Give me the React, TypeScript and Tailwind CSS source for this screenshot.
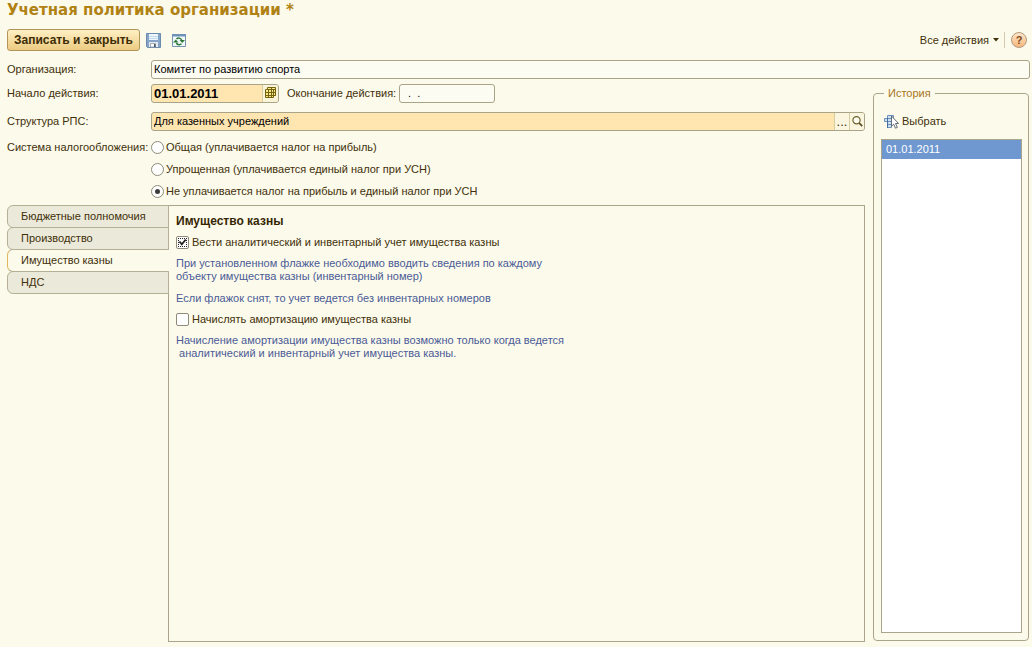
import { useState } from "react";

const taxSystems = [
  "Общая (уплачивается налог на прибыль)",
  "Упрощенная (уплачивается единый налог при УСН)",
  "Не уплачивается налог на прибыль и единый налог при УСН",
];

const tabs = ["Бюджетные полномочия", "Производство", "Имущество казны", "НДС"];

function SaveIcon() {
  return (
    <svg width="15" height="15" viewBox="0 0 15 15" aria-hidden="true">
      <path d="M.5.5h14v14h-13l-1-1z" fill="#86a5c8" stroke="#6a8aae" />
      <path d="M3 1h9v6H3z" fill="#eef6fb" />
      <path d="M3 3.500h9M3 5.500h9" stroke="#c3dbea" />
      <path d="M3 9h9v5H3z" fill="#e6eaec" />
      <path d="M4.500 10.500h5v3.500h-5z" fill="#fff" stroke="#8a99a8" strokeWidth=".8" />
      <path d="M8 11h1.500v3H8z" fill="#46586c" />
    </svg>
  );
}

function RefreshIcon() {
  return (
    <svg width="14" height="13" viewBox="0 0 14 13" aria-hidden="true">
      <path d="M.5.5h13v12H.5z" fill="#f4fafc" stroke="#7893ad" />
      <path d="M0 0h14v2.500H0z" fill="#6f92b8" />
      <path d="M4.500 5C6 3.600 8.500 3.800 9.700 5.800M9.500 9.800C8 11.200 5.500 11 4.300 9" fill="none" stroke="#2d7a38" strokeWidth="1.500" />
      <path d="M7.500 6h5.500L10.200 9zM1 8.500h5.500L3.800 5.500z" fill="#2d7a38" />
    </svg>
  );
}

function CalendarIcon() {
  return (
    <svg width="11" height="12" viewBox="0 0 11 12" aria-hidden="true">
      <path d="M2.500.500h8v8h-2v2h-8v-8h2z" fill="#f7e88a" stroke="#75620f" />
      <path d="M.500 5.500h10M.500 8.500h10M2.500 2.500h8M3.500 2.500v8M6.500 1v9.500M8.500 2v7" stroke="#75620f" fill="none" />
    </svg>
  );
}

function SearchIcon() {
  return (
    <svg width="11" height="11" viewBox="0 0 11 11" aria-hidden="true">
      <circle cx="4.500" cy="4.200" r="3.600" fill="#fdfdf0" stroke="#6f6330" strokeWidth="1.200" />
      <path d="M7 6.800l3.200 3.400" stroke="#5f5425" strokeWidth="1.800" />
    </svg>
  );
}

function SelectIcon() {
  return (
    <svg width="15" height="15" viewBox="0 0 15 15" aria-hidden="true">
      <path d="M3.500 1.500h6v3h-6zM.5 4.500h9v3h-9zM3.500 7.500h5v3h-5zM3.500 10.500h4v3h-4z" fill="#cfe0f0" stroke="#6d93bd" />
      <path d="M3.500 4v10" stroke="#44719f" />
      <path d="M7.500 2v10.200l2.200-2 1.800 4 1.800-.8-1.800-3.900h3z" fill="#fff" stroke="#555e6c" strokeWidth=".9" />
    </svg>
  );
}

function CheckBox({ id, label, initial }: { id: string; label: string; initial?: boolean }) {
  const [on, setOn] = useState(Boolean(initial));
  return (
    <div className="flex h-4 items-center gap-[3px]">
      <span className="relative flex size-[13px]">
        <input
          id={id}
          type="checkbox"
          checked={on}
          onChange={(e) => setOn(e.target.checked)}
          className="size-[13px] appearance-none rounded-[2px] border border-[#8f8b78] bg-white"
        />
        {on && (
          <svg className="pointer-events-none absolute inset-0" width="13" height="13" viewBox="0 0 13 13" aria-hidden="true">
            <path d="M2 2.500h9M2 10.500h9M2.500 2v9M10.500 2v9" stroke="#222" strokeDasharray="1 1" />
            <path d="M3.500 5.500l2.300 2.800 4-4.800" fill="none" stroke="#222" strokeWidth="1.900" />
          </svg>
        )}
      </span>
      <label htmlFor={id}>{label}</label>
    </div>
  );
}

export default function App() {
  const [tax, setTax] = useState(2);
  const [tab, setTab] = useState(2);

  return (
    <main className="flex min-h-screen flex-col bg-[#fcfaeb] pr-[2px] pb-[5px] pl-[7px] font-['Liberation_Sans',Arial,sans-serif] text-[11px] leading-[13px] text-[#41300a]">
      <h1 className="h-[29px] font-['DejaVu_Sans',Verdana,sans-serif] text-[15px] leading-5 font-bold text-[#b08214]">
        Учетная политика организации *
      </h1>

      <div className="flex h-[22px] items-center">
        <button className="h-[22px] rounded-[3px] border border-[#b3955a] bg-linear-to-b from-[#fff0c4] to-[#eccb80] px-[6px] text-[12px] font-bold text-[#3d2c05]">
          Записать и закрыть
        </button>
        <button aria-label="Записать" className="ml-[6px]"><SaveIcon /></button>
        <button aria-label="Перечитать" className="ml-[11px]"><RefreshIcon /></button>
        <button className="ml-auto flex items-center gap-1">
          Все действия
          <svg width="6" height="4" viewBox="0 0 6 4" aria-hidden="true"><path d="M0 0h6L3 3.500z" fill="#41300a" /></svg>
        </button>
        <span className="ml-[5px] h-4 w-px bg-[#cfcab0]" />
        <button
          aria-label="Справка"
          className="ml-[6px] mr-[3px] size-4 rounded-full border border-[#b39a80] bg-linear-to-b from-[#ffe6c8] to-[#f5b67c] text-[11px] leading-[14px] font-bold text-[#7c4a22]"
        >
          ?
        </button>
      </div>

      <div className="mt-[8px] flex h-5 items-center">
        <label htmlFor="org" className="w-36 shrink-0">Организация:</label>
        <input id="org" defaultValue="Комитет по развитию спорта" className="h-[19px] min-w-0 flex-1 rounded-[3px] border border-[#a9a387] bg-[#fdfcf2] px-[2px] text-black" />
      </div>

      <div className="flex flex-1 gap-2">
        <div className="flex min-w-0 flex-1 flex-col">
          <div className="mt-[4px] flex h-5 items-center">
            <label htmlFor="start" className="w-36 shrink-0">Начало действия:</label>
            <div className="flex h-[19px] w-32 overflow-hidden rounded-[3px] border border-[#a9a387] bg-[#ffe5b0]">
              <input id="start" defaultValue="01.01.2011" className="min-w-0 flex-1 px-[2px] text-[13px] font-bold text-black" />
              <button aria-label="Календарь" className="flex w-4 items-center justify-center border-l border-[#d8cda0] bg-[#f9f3d8]">
                <CalendarIcon />
              </button>
            </div>
            <label htmlFor="end" className="ml-2 w-28">Окончание действия:</label>
            <input id="end" defaultValue="  .  ." className="h-[19px] w-24 rounded-[3px] border border-[#a9a387] bg-[#fdfcf2] px-[2px] text-black" />
          </div>

          <div className="mt-[8px] flex h-5 items-center">
            <label htmlFor="rps" className="w-36 shrink-0">Структура РПС:</label>
            <div className="flex h-[19px] min-w-0 flex-1 overflow-hidden rounded-[3px] border border-[#a9a387] bg-[#ffe5b0]">
              <input id="rps" defaultValue="Для казенных учреждений" className="min-w-0 flex-1 px-[2px] text-black" />
              <button aria-label="Выбрать из списка" className="w-[15px] border-l border-[#d8cda0] bg-[#faf6df] text-[13px]">...</button>
              <button aria-label="Открыть" className="flex w-[15px] items-center justify-center border-l border-[#d8cda0] bg-[#faf6df]">
                <SearchIcon />
              </button>
            </div>
          </div>

          <div role="radiogroup" aria-labelledby="tax-label" className="mt-[5px] flex">
            <span id="tax-label" className="w-36 shrink-0 leading-[22px]">Система налогообложения:</span>
            <div>
              {taxSystems.map((name, i) => (
                <label key={name} className="flex h-[22px] items-center gap-[2px]">
                  <input
                    type="radio"
                    name="tax"
                    checked={tax === i}
                    onChange={() => setTax(i)}
                    className="flex size-[13px] appearance-none items-center justify-center rounded-full border border-[#8f8b78] bg-white before:size-[5px] before:rounded-full checked:before:bg-[#3c3c3c]"
                  />
                  {name}
                </label>
              ))}
            </div>
          </div>

          <div className="mt-[3px] flex flex-1">
            <div role="tablist" aria-orientation="vertical" className="relative z-10 -mr-px flex w-[162px] shrink-0 flex-col">
              {tabs.map((name, i) => (
                <button
                  key={name}
                  role="tab"
                  aria-selected={tab === i}
                  onClick={() => setTab(i)}
                  className={
                    tab === i
                      ? "-mb-px h-[23px] rounded-l-[6px] border border-r-0 border-[#b5b095] border-l-[#e0b660] bg-[#fcfaeb] pl-[13px] text-left"
                      : "-mb-px h-[23px] rounded-l-[6px] border border-[#b5b095] bg-[#ebe9d9] pl-[13px] text-left"
                  }
                >
                  {name}
                </button>
              ))}
            </div>
            <section role="tabpanel" className="flex-1 border border-[#aaa58a] px-[7px] pt-[9px]">
              <h2 className="text-[12px] font-bold text-[#352603]">Имущество казны</h2>
              <div className="mt-[6px]">
                <CheckBox id="analytic" initial label="Вести аналитический и инвентарный учет имущества казны" />
              </div>
              <p className="mt-[7px] text-[#4a5a96]">
                При установленном флажке необходимо вводить сведения по каждому
                <br />
                объекту имущества казны (инвентарный номер)
              </p>
              <p className="mt-[9px] text-[#4a5a96]">Если флажок снят, то учет ведется без инвентарных номеров</p>
              <div className="mt-[6px]">
                <CheckBox id="amortize" label="Начислять амортизацию имущества казны" />
              </div>
              <p className="mt-[7px] text-[#4a5a96]">
                Начисление амортизации имущества казны возможно только когда ведется
                <br />
                &nbsp;аналитический и инвентарный учет имущества казны.
              </p>
            </section>
          </div>
        </div>

        <fieldset className="mt-[8px] mr-px mb-px flex w-[156px] shrink-0 flex-col rounded-[4px] border border-[#aaa58a] px-[7px] pb-[7px]">
          <legend className="ml-[3px] px-[4px] text-[#a8761c]">История</legend>
          <div className="-mr-px flex h-full flex-col">
            <button className="mt-[13px] flex h-4 items-center gap-[3px] pl-[3px] text-[12px]">
              <SelectIcon />
              <span className="text-[11px]">Выбрать</span>
            </button>
            <ul className="mt-[10px] flex-1 border border-[#aaa58a] bg-white">
              <li className="bg-[#6f98d0] pl-[4px] leading-[19px] text-white">01.01.2011</li>
            </ul>
          </div>
        </fieldset>
      </div>
    </main>
  );
}
